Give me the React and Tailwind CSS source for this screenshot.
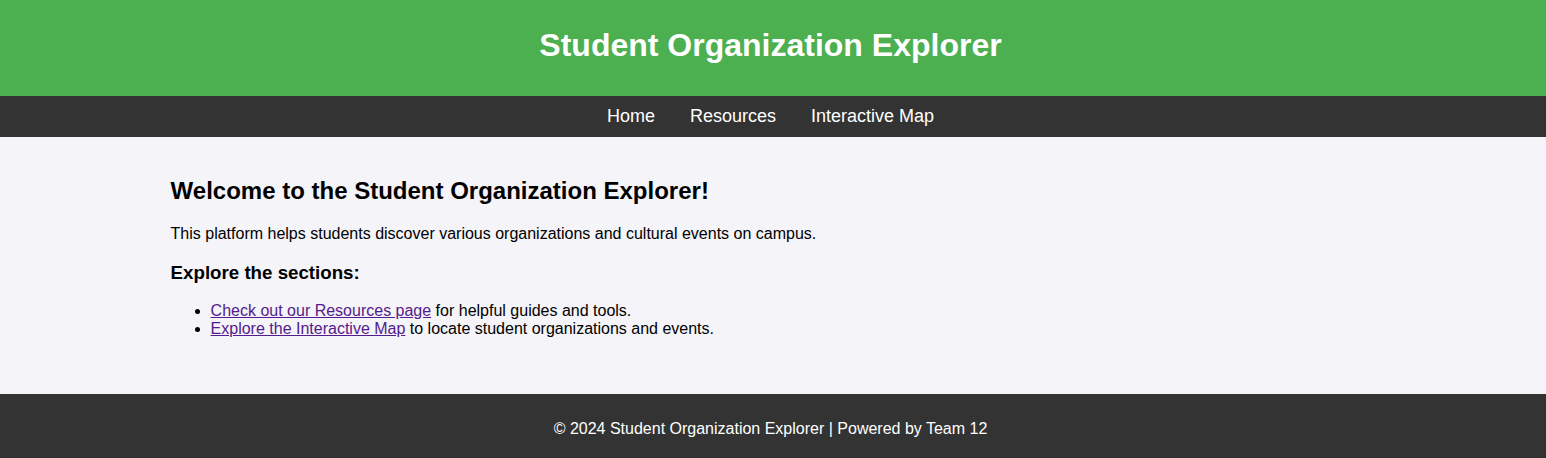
export default function App() {
  const font = { fontFamily: '"Liberation Sans", Arial, sans-serif' };
  return (
    <div style={font} className="min-h-[458px] flex flex-col bg-[#f4f4f9] text-black">
      <header className="bg-[#4CAF50] h-[96px] pt-[27px] pr-[5px] text-center">
        <h1 className="text-[32px] leading-[37px] font-bold text-white">Student Organization Explorer</h1>
      </header>
      <nav className="bg-[#333333] h-[41px] pr-[5px] pb-[1px] flex items-center justify-center">
        <a href="#" className="text-white text-[18px] leading-[20px] mx-[17.5px] no-underline">Home</a>
        <a href="#" className="text-white text-[18px] leading-[20px] mx-[17.5px] no-underline">Resources</a>
        <a href="#" className="text-white text-[18px] leading-[20px] mx-[17.5px] no-underline">Interactive Map</a>
      </nav>
      <main className="w-[80%] mx-auto px-4 pt-[40px] pb-[35px] self-stretch">
        <div className="w-full">
          <h2 className="text-[24px] leading-[27.6px] font-bold">Welcome to the Student Organization Explorer!</h2>
          <p className="text-[16px] leading-[18.4px] mt-[20px]">This platform helps students discover various organizations and cultural events on campus.</p>
          <h3 className="text-[18.72px] leading-[21.5px] font-bold mt-[18.72px]">Explore the sections:</h3>
          <ul className="list-disc pl-[40px] mt-[18.72px] text-[16px] leading-[18.4px]">
            <li><a href="#" className="text-[#551A8B] underline">Check out our Resources page</a> for helpful guides and tools.</li>
            <li><a href="#" className="text-[#551A8B] underline">Explore the Interactive Map</a> to locate student organizations and events.</li>
          </ul>
        </div>
      </main>
      <footer className="bg-[#333333] h-[64px] pt-[26px] pr-[5px] text-center text-white mt-auto">
        <p className="text-[16px] leading-[18.4px]">© 2024 Student Organization Explorer | Powered by Team 12</p>
      </footer>
    </div>
  );
}
